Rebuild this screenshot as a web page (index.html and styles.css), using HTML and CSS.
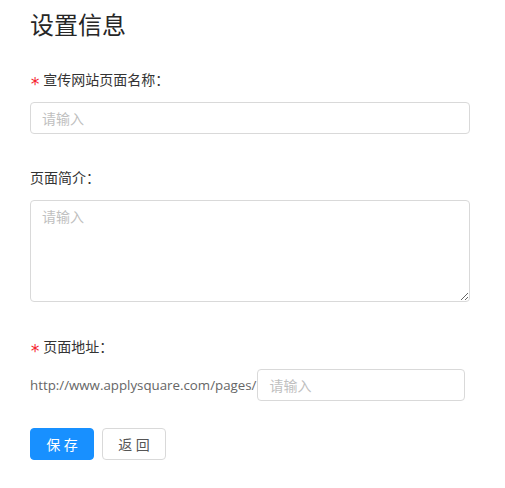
FILE: index.html
```html
<!DOCTYPE html>
<html lang="zh-CN">

<head>
  <meta charset="UTF-8">
  <meta name="viewport" content="width=device-width, initial-scale=1.0">
  <title>设置信息</title>
  <link rel="stylesheet" href="styles.css">
</head>

<body>
  <div class="page">
    <h1 class="title">设置信息</h1>

    <div class="field field-first">
      <label class="label required">宣传网站页面名称：</label>
      <input class="input" type="text" placeholder="请输入">
    </div>

    <div class="field field-textarea">
      <label class="label">页面简介：</label>
      <textarea class="textarea" placeholder="请输入"></textarea>
    </div>

    <div class="field field-last">
      <label class="label required">页面地址：</label>
      <div class="url-row">
        <span class="url-prefix">http://www.applysquare.com/pages/</span>
        <input class="input url-input" type="text" placeholder="请输入">
      </div>
    </div>

    <div class="actions">
      <button class="btn btn-primary">保 存</button>
      <button class="btn">返 回</button>
    </div>
  </div>
</body>

</html>
```

FILE: styles.css
```css
body {
  margin: 0;
  background-color: #fff;
  font-family: "Open Sans", "Noto Sans CJK SC", sans-serif;
  color: #333;
}

.page {
  width: 440px;
  padding: 7px 30px 0;
}

.title {
  margin: 0 0 27px;
  font-size: 24px;
  font-weight: normal;
  line-height: 36px;
  color: #262626;
}

.field {
  margin-bottom: 36px;
}

.field-first {
  margin-bottom: 34px;
}

.field-textarea {
  margin-bottom: 35px;
}

.field-last {
  margin-bottom: 27px;
}

.label {
  display: block;
  height: 20px;
  margin-bottom: 12px;
  font-size: 14px;
  line-height: 20px;
  color: #333;
}

.label.required::before {
  content: "*";
  display: inline-block;
  margin-right: 3px;
  font-family: "DejaVu Sans Mono", monospace;
  font-size: 17px;
  line-height: 14px;
  vertical-align: -5px;
  color: #f5222d;
}

.input,
.textarea {
  box-sizing: border-box;
  display: block;
  width: 440px;
  height: 32px;
  padding: 4px 11px;
  font-family: inherit;
  font-size: 14px;
  color: #333;
  border: 1px solid #d9d9d9;
  border-radius: 4px;
  outline: none;
}

.textarea {
  height: 102px;
  padding: 6px 11px;
  line-height: 20px;
  resize: vertical;
}

.input::placeholder,
.textarea::placeholder {
  color: #bfbfbf;
}

.url-row {
  display: flex;
  align-items: center;
}

.url-prefix {
  font-size: 13.3px;
  color: #666;
  white-space: nowrap;
}

.url-input {
  width: 208px;
  margin-left: 1px;
}

.actions {
  display: flex;
  gap: 8px;
}

.btn {
  width: 64px;
  height: 32px;
  font-family: inherit;
  font-size: 14px;
  color: #555;
  background-color: #fff;
  border: 1px solid #d9d9d9;
  border-radius: 4px;
  cursor: pointer;
}

.btn-primary {
  color: #fff;
  background-color: #1890ff;
  border-color: #1890ff;
}
```
